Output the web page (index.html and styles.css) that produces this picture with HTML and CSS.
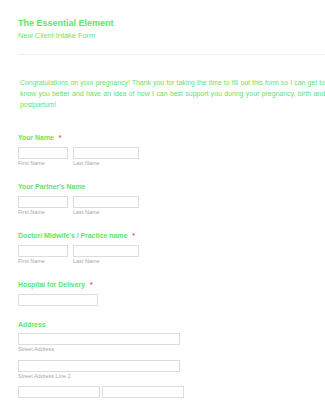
FILE: index.html
```html
<!DOCTYPE html>
<html lang="en">
<head>
  <meta charset="UTF-8">
  <meta name="viewport" content="width=device-width, initial-scale=1.0">
  <title>New Client Intake Form</title>
  <link rel="stylesheet" href="styles.css">
</head>
<body>

<form class="form">

  <!-- Form header -->
  <div class="form-header">
    <h1>The Essential Element</h1>
    <p class="subtitle">New Client Intake Form</p>
  </div>

  <p class="intro">Congratulations on your pregnancy! Thank you for taking the time to fill out this form so I can get to know you better and have an idea of how I can best support you during your pregnancy, birth and postpartum!</p>

  <!-- Your Name -->
  <div class="field">
    <label class="field-label">Your Name <span class="req">*</span></label>
    <div class="row">
      <div class="sub">
        <input type="text" class="input first">
        <span class="sublabel">First Name</span>
      </div>
      <div class="sub">
        <input type="text" class="input last">
        <span class="sublabel">Last Name</span>
      </div>
    </div>
  </div>

  <!-- Partner -->
  <div class="field">
    <label class="field-label">Your Partner's Name</label>
    <div class="row">
      <div class="sub">
        <input type="text" class="input first">
        <span class="sublabel">First Name</span>
      </div>
      <div class="sub">
        <input type="text" class="input last">
        <span class="sublabel">Last Name</span>
      </div>
    </div>
  </div>

  <!-- Doctor -->
  <div class="field">
    <label class="field-label">Doctor/ Midwife's / Practice name <span class="req">*</span></label>
    <div class="row">
      <div class="sub">
        <input type="text" class="input first">
        <span class="sublabel">First Name</span>
      </div>
      <div class="sub">
        <input type="text" class="input last">
        <span class="sublabel">Last Name</span>
      </div>
    </div>
  </div>

  <!-- Hospital -->
  <div class="field single">
    <label class="field-label">Hospital for Delivery <span class="req">*</span></label>
    <input type="text" class="input medium">
  </div>

  <!-- Address -->
  <div class="field address">
    <label class="field-label">Address</label>
    <div class="sub">
      <input type="text" class="input wide">
      <span class="sublabel">Street Address</span>
    </div>
    <div class="sub">
      <input type="text" class="input wide">
      <span class="sublabel">Street Address Line 2</span>
    </div>
    <div class="row tight">
      <div class="sub">
        <input type="text" class="input half">
        <span class="sublabel">City</span>
      </div>
      <div class="sub">
        <input type="text" class="input half">
        <span class="sublabel">State / Province</span>
      </div>
    </div>
  </div>

</form>

</body>
</html>
```

FILE: styles.css
```css
body {
  margin: 0;
  background-color: #fff;
  font-family: "Liberation Sans", Arial, sans-serif;
  overflow: hidden;
}

.form {
  padding: 0 0 0 18px;
}

/* Header */
.form-header {
  padding-top: 17px;
  padding-bottom: 13px;
  border-bottom: 1px solid #eeeeee;
}

h1 {
  margin: 0;
  font-size: 9px;
  line-height: 12px;
  font-weight: bold;
  color: #5ee46a;
}

.subtitle {
  margin: 2px 0 0;
  font-size: 7.4px;
  line-height: 10px;
  color: #66e672;
}

.intro {
  width: 305px;
  margin: 22px 0 23px 2px;
  font-size: 6.9px;
  line-height: 11px;
  text-align: justify;
  color: #5ee46a;
}

/* Fields */
.field {
  padding-bottom: 15px;
}

.field.single {
  padding-bottom: 14px;
}

.field-label {
  display: block;
  font-size: 6.9px;
  line-height: 10px;
  font-weight: bold;
  color: #5ee46a;
  margin-bottom: 4px;
}

.req {
  color: #f24b4b;
  margin-left: 3px;
}

.row {
  display: flex;
  gap: 5px;
}

.row.tight {
  gap: 2px;
}

.sub {
  display: flex;
  flex-direction: column;
}

.input {
  display: block;
  box-sizing: border-box;
  height: 12px;
  margin: 0;
  padding: 0;
  border: 1px solid #dcdcdc;
  border-radius: 0;
  background: #fff;
}

.input.first { width: 50px; }
.input.last { width: 66px; }
.input.medium { width: 80px; }
.input.wide { width: 162px; }
.input.half { width: 82px; }

.sublabel {
  font-size: 5.5px;
  line-height: 8px;
  color: #a8a8a8;
}

.address .field-label {
  margin-bottom: 3px;
}

.address .sub {
  margin-bottom: 7px;
}

.address .sub + .sub {
  margin-bottom: 6px;
}

.address .row .sub {
  margin-bottom: 0;
}
```
